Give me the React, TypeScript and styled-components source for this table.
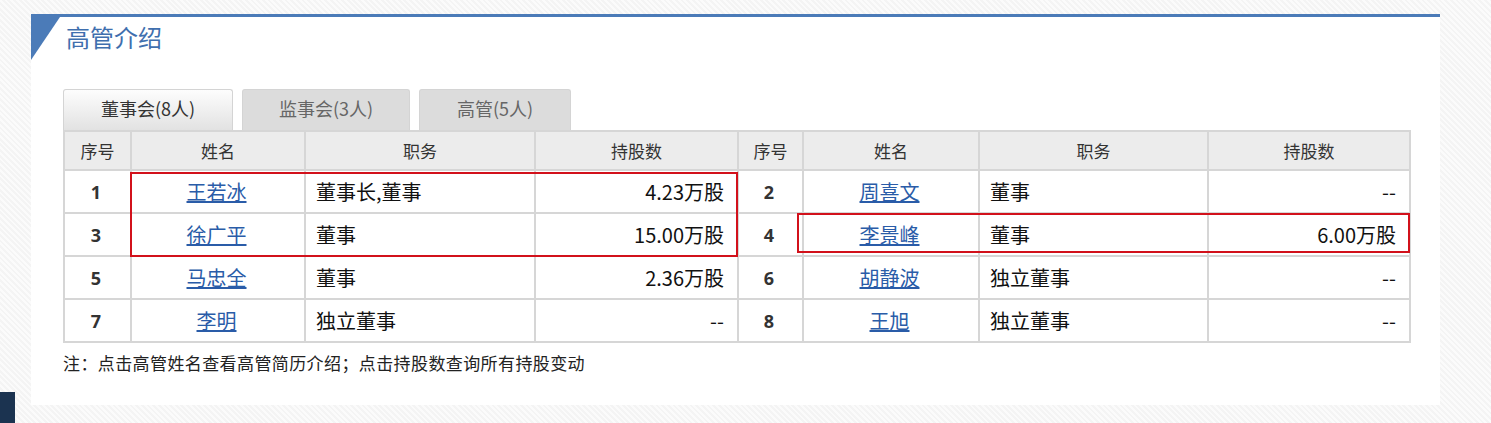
import React from 'react';
import styled, { createGlobalStyle } from 'styled-components';

const GlobalStyle = createGlobalStyle`
  html, body {
    margin: 0;
    padding: 0;
    height: 100%;
  }
  body {
    font-family: "Noto Sans CJK SC", "Noto Sans", sans-serif;
    background: repeating-linear-gradient(
      45deg,
      #f4f4f4 0px,
      #f4f4f4 2px,
      #fbfbfb 2px,
      #fbfbfb 4px
    );
    overflow: hidden;
  }
`;

const Page = styled.div`
  position: relative;
  width: 1491px;
  height: 423px;
  padding: 14px 0 0 31px;
  box-sizing: border-box;
`;

const Panel = styled.div`
  position: relative;
  width: 1409px;
  height: 391px;
  background: #fff;
  border-top: 3px solid #4b7bb8;
  box-sizing: border-box;
  padding: 0 0 0 32px;
`;

const Corner = styled.div`
  position: absolute;
  left: 0;
  top: 0;
  width: 0;
  height: 0;
  border-top: 43px solid #4b7bb8;
  border-right: 29px solid transparent;
`;

const Title = styled.h2`
  margin: 0;
  padding: 4px 0 0 3px;
  height: 72px;
  box-sizing: border-box;
  font-size: 24px;
  font-weight: normal;
  line-height: 32px;
  color: #3f6fae;
`;

const Tabs = styled.div`
  display: flex;
  gap: 9px;
  height: 41px;
`;

const Tab = styled.div<{ $active?: boolean; $width: number }>`
  height: 41px;
  width: ${(p) => p.$width}px;
  box-sizing: border-box;
  border: 1px solid #d4d4d4;
  border-bottom: none;
  border-radius: 3px 3px 0 0;
  background: ${(p) =>
    p.$active ? 'linear-gradient(#fdfdfd, #e2e2e2)' : '#dcdcdc'};
  color: ${(p) => (p.$active ? '#333' : '#666')};
  font-size: 18px;
  line-height: 36px;
  text-align: center;
`;

const TableWrap = styled.div`
  position: relative;
  width: 1346px;
`;

const Table = styled.table`
  border-collapse: collapse;
  width: 1346px;
  table-layout: fixed;
`;

const Th = styled.th`
  height: 37px;
  padding: 0;
  background: #ececec;
  border: 2px solid #d6d6d6;
  font-size: 17px;
  font-weight: normal;
  color: #333;
  text-align: center;
`;

const Td = styled.td<{ $align?: string }>`
  height: 41px;
  padding: 0 13px 0 10px;
  border: 2px solid #d6d6d6;
  font-size: 20px;
  line-height: 24px;
  color: #111;
  text-align: ${(p) => p.$align || 'left'};
`;

const Num = styled(Td)`
  text-align: center;
  font-weight: bold;
  font-size: 18px;
  color: #333;
  font-family: "Open Sans", "Noto Sans", sans-serif;
`;

const Share = styled(Td)`
  text-align: right;
`;

const NameLink = styled.a`
  color: #2a5ca8;
  text-decoration: underline;
  cursor: pointer;
`;

const Highlight = styled.div`
  position: absolute;
  box-sizing: border-box;
  border: 2px solid #d2111b;
  pointer-events: none;
`;

const Note = styled.p`
  margin: 7px 0 0;
  font-size: 17px;
  letter-spacing: 0.4px;
  color: #222;
`;

const DarkBlock = styled.div`
  position: absolute;
  left: 0;
  bottom: 0;
  width: 15px;
  height: 31px;
  background: #1b3350;
`;

const cols = [67, 174, 230, 203, 65, 176, 229, 202];

const rows = [
  [
    { no: 1, name: '王若冰', duty: '董事长,董事', share: '4.23万股' },
    { no: 2, name: '周喜文', duty: '董事', share: '--' },
  ],
  [
    { no: 3, name: '徐广平', duty: '董事', share: '15.00万股' },
    { no: 4, name: '李景峰', duty: '董事', share: '6.00万股' },
  ],
  [
    { no: 5, name: '马忠全', duty: '董事', share: '2.36万股' },
    { no: 6, name: '胡静波', duty: '独立董事', share: '--' },
  ],
  [
    { no: 7, name: '李明', duty: '独立董事', share: '--' },
    { no: 8, name: '王旭', duty: '独立董事', share: '--' },
  ],
];

const App: React.FC = () => {
  return (
    <Page>
      <GlobalStyle />
      <Panel>
        <Corner />
        <Title>高管介绍</Title>
        <Tabs>
          <Tab $active $width={170}>董事会(8人)</Tab>
          <Tab $width={168}>监事会(3人)</Tab>
          <Tab $width={152}>高管(5人)</Tab>
        </Tabs>
        <TableWrap>
          <Table>
            <colgroup>
              {cols.map((w, i) => (
                <col key={i} style={{ width: w }} />
              ))}
            </colgroup>
            <thead>
              <tr>
                <Th>序号</Th>
                <Th>姓名</Th>
                <Th>职务</Th>
                <Th>持股数</Th>
                <Th>序号</Th>
                <Th>姓名</Th>
                <Th>职务</Th>
                <Th>持股数</Th>
              </tr>
            </thead>
            <tbody>
              {rows.map((pair, i) => (
                <tr key={i}>
                  {pair.map((p) => (
                    <React.Fragment key={p.no}>
                      <Num>{p.no}</Num>
                      <Td $align="center">
                        <NameLink>{p.name}</NameLink>
                      </Td>
                      <Td>{p.duty}</Td>
                      <Share>{p.share}</Share>
                    </React.Fragment>
                  ))}
                </tr>
              ))}
            </tbody>
          </Table>
          <Highlight style={{ left: 67, top: 42, width: 608, height: 85 }} />
          <Highlight style={{ left: 734, top: 83, width: 613, height: 40 }} />
        </TableWrap>
        <Note>注：点击高管姓名查看高管简历介绍；点击持股数查询所有持股变动</Note>
      </Panel>
      <DarkBlock />
    </Page>
  );
};

export default App;
